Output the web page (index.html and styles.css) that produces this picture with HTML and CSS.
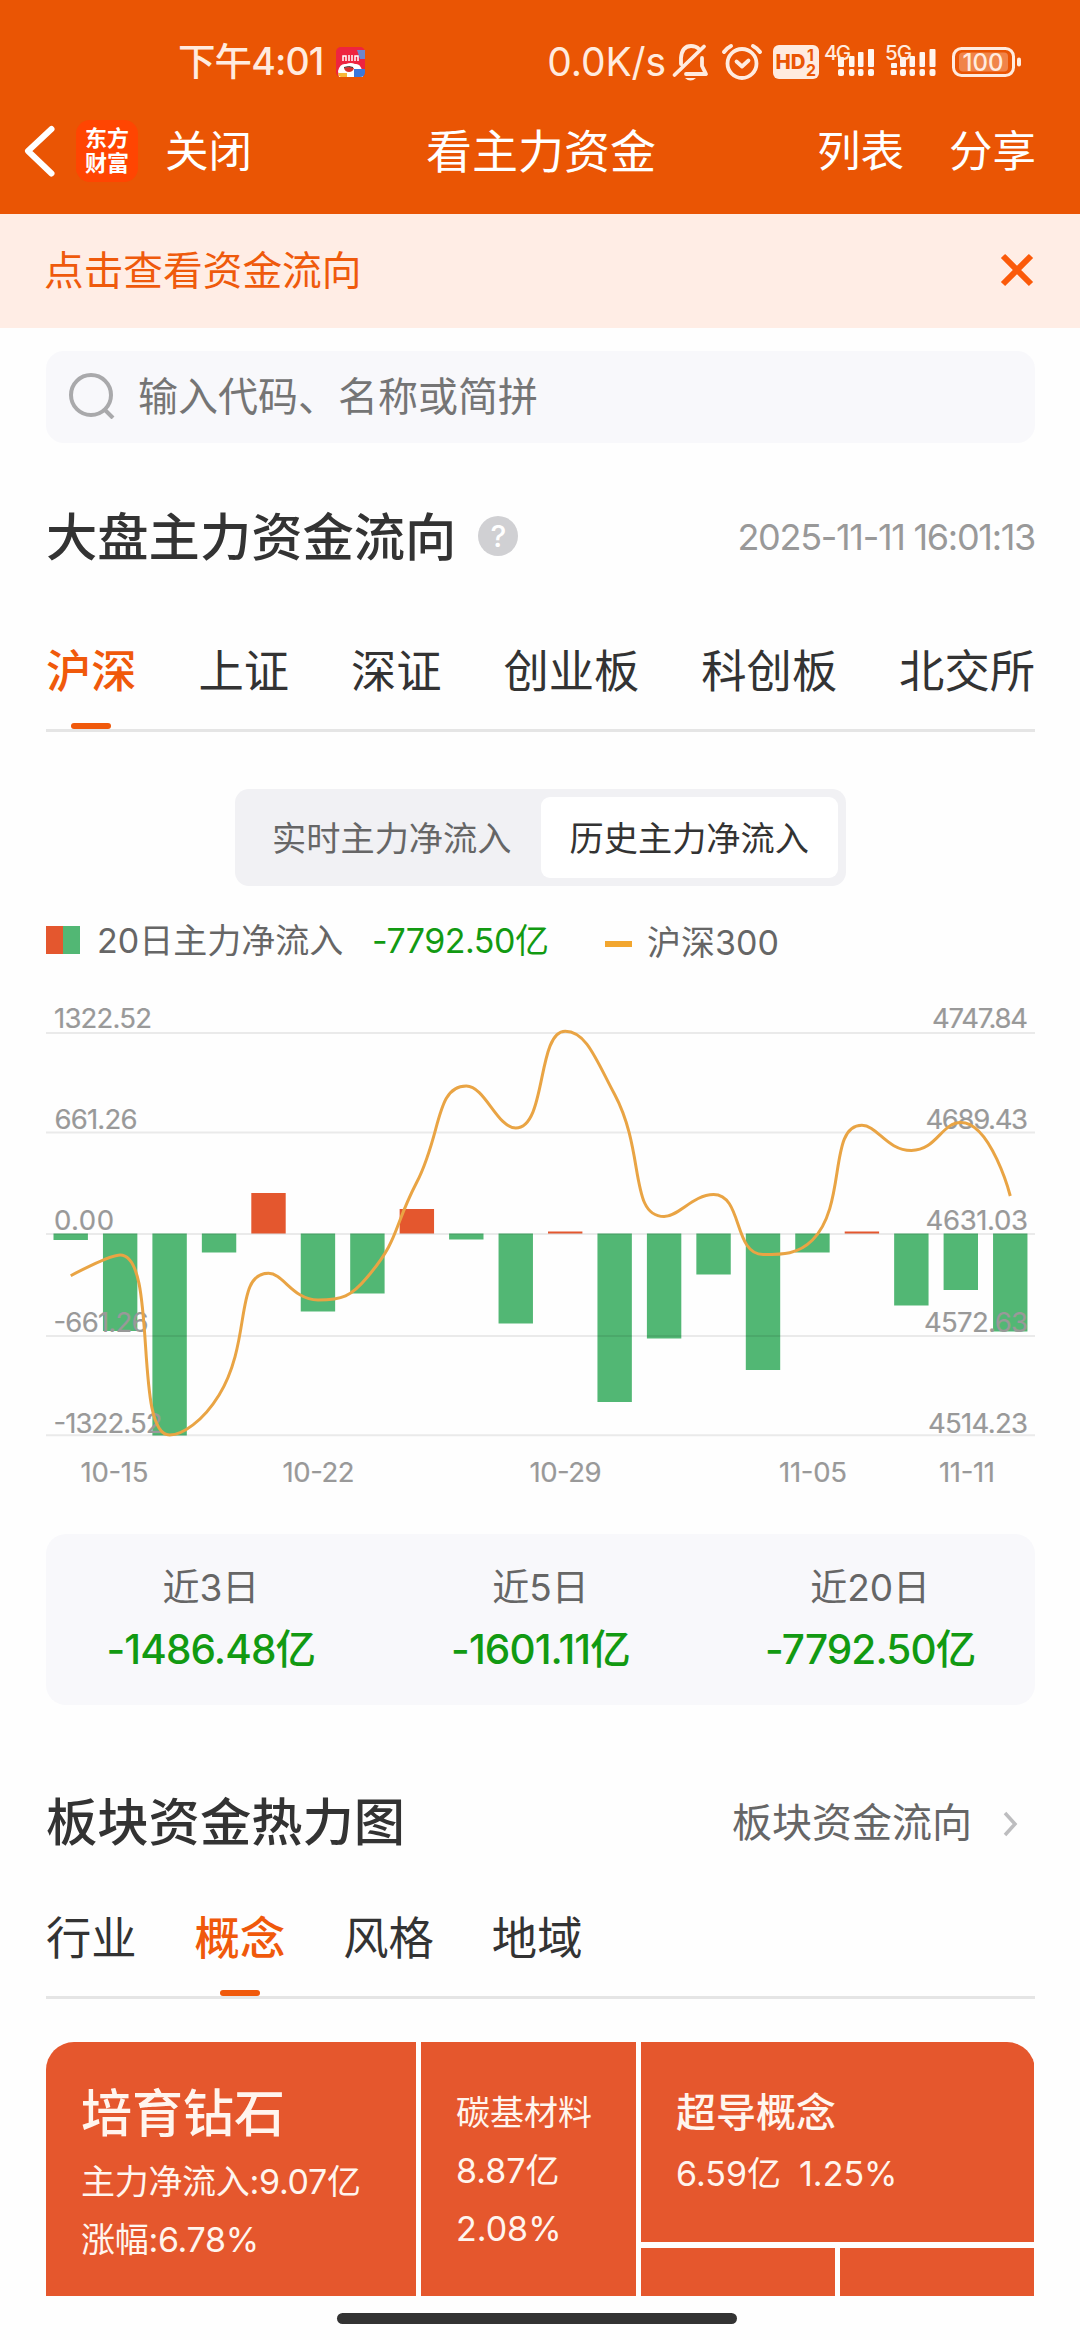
FILE: index.html
```html
<!DOCTYPE html>
<html lang="zh-CN">
<head>
<meta charset="utf-8">
<title>看主力资金</title>
<link rel="stylesheet" href="styles.css">
</head>
<body>
<div class="screen">
  <header class="header">
    <div class="status">
      <span class="clock">下午4:01</span>
      <svg class="app-badge" width="29" height="30" viewBox="0 0 29 30">
        <rect width="29" height="30" rx="5" fill="#ee2440"/>
        <path d="M21 3h8v9h-5z" fill="#6f86cc"/>
        <path d="M7 14V9h3v5M13 8v6M16 8v6M19 14V9h3v5" stroke="#fff" stroke-width="1.500" fill="none"/>
        <path d="M2 24q2-8 8-7 5-2 9 0 5-1 7 6l1 7H3z" fill="#fff"/>
        <path d="M8 21q5-2 10 0-1 4-5 4-4 0-5-4z" fill="#d8302c"/>
        <path d="M8 20.500q5-2 9 0" stroke="#333" fill="none"/>
        <path d="M18 22h11v3q0 5-5 5h-6z" fill="#3a78dc"/>
        <path d="M2 26h9v4H5q-3-1-3-4z" fill="#f8b838"/>
      </svg>
      <div class="status-right">
        <span class="speed">0.0K/s</span>
        <svg class="status-icons" width="356" height="40" viewBox="668 42 356 40" fill="none">
          <g stroke="#ffebdf" stroke-width="3.800" stroke-linecap="round" stroke-linejoin="round">
            <path d="M681 64V58Q682 46 691 46Q696 46 699 49M702 58V66L706 74H686M674.500 75L704 46.500"/>
            <circle cx="742" cy="63.500" r="14.500"/>
            <path d="M736.500 61.500l5.500 5 6.500-6"/>
            <path d="M724 52q3-4 7-6M760 52q-3-4-7-6" stroke-width="4"/>
          </g>
          <path d="M685 78h11q-5.500 5-11 0z" fill="#ffebdf"/>
          <rect x="773" y="45" width="46" height="34" rx="6" fill="#ffebdf"/>
          <g fill="#ea5504" font-family="Inter, sans-serif" font-weight="700">
            <text x="775.500" y="69" font-size="19.500" font-weight="800" textLength="30" lengthAdjust="spacingAndGlyphs">HD</text>
            <text x="807" y="60.500" font-size="16">1</text>
            <text x="806" y="75.500" font-size="16" textLength="10" lengthAdjust="spacingAndGlyphs">2</text>
          </g>
          <g fill="#fff5ee">
            <rect x="838" y="57" width="6" height="10" rx="1"/><rect x="849" y="56" width="5.500" height="11" rx="1"/><rect x="858" y="52" width="5.500" height="15" rx="1"/><rect x="868" y="49" width="6" height="18" rx="1"/>
            <rect x="838" y="69" width="6" height="7" rx="2"/><rect x="849" y="69" width="5.500" height="7" rx="2"/><rect x="858" y="69" width="5.500" height="7" rx="2"/><rect x="868" y="69" width="6" height="7" rx="2"/>
            <rect x="891" y="63" width="6" height="5" rx="1"/><rect x="891" y="70" width="6" height="5" rx="1"/>
            <rect x="900" y="57" width="6" height="10" rx="1"/><rect x="909.500" y="56" width="5.500" height="11" rx="1"/><rect x="919.500" y="52" width="5.500" height="15" rx="1"/><rect x="929.500" y="49" width="6" height="18" rx="1"/>
            <rect x="900" y="69" width="6" height="7" rx="2"/><rect x="909.500" y="69" width="5.500" height="7" rx="2"/><rect x="919.500" y="69" width="5.500" height="7" rx="2"/><rect x="929.500" y="69" width="6" height="7" rx="2"/>
          </g>
          <g fill="#ffebdf" font-family="Inter, sans-serif" font-weight="500">
            <text x="824" y="60" font-size="20.500" textLength="27">4G</text>
            <text x="885" y="60" font-size="20.500" textLength="27">5G</text>
          </g>
          <rect x="953.500" y="48.500" width="60" height="27" rx="8" stroke="#ffebdf" stroke-width="3"/>
          <rect x="959" y="52.500" width="49" height="19" rx="4" fill="#fff" opacity=".28"/>
          <rect x="1017" y="57.500" width="4" height="9" rx="2" fill="#ffebdf"/>
          <text x="962.500" y="71" font-size="24" font-weight="500" textLength="41" fill="#ffebdf" font-family="Inter, sans-serif">100</text>
        </svg>
      </div>
    </div>
    <nav class="nav">
      <svg class="back" width="34" height="54" viewBox="22 125 34 54" fill="none" stroke="#fff" stroke-width="6" stroke-linecap="round" stroke-linejoin="round"><path d="M51.500 130L28 152l23.500 22.500"/></svg>
      <div class="logo"><span>东方</span><span>财富</span></div>
      <span class="nav-text close-page">关闭</span>
      <h1 class="nav-title">看主力资金</h1>
      <span class="nav-text list">列表</span>
      <span class="nav-text">分享</span>
    </nav>
  </header>

  <div class="banner">
    <span>点击查看资金流向</span>
    <svg width="34" height="34" viewBox="0 0 34 34" stroke="#fb5a0a" stroke-width="6"><path d="M3 3l28 28M31 3L3 31"/></svg>
  </div>

  <main class="content">
    <div class="search">
      <svg width="48" height="48" viewBox="0 0 48 48" fill="none" stroke="#a9a9ab" stroke-width="4"><circle cx="23" cy="24" r="20"/><path d="M37 39l8 8"/></svg>
      <span>输入代码、名称或简拼</span>
    </div>

    <section class="title-row market-title">
      <h2>大盘主力资金流向</h2>
      <span class="help">?</span>
      <time class="num">2025-11-11 16:01:13</time>
    </section>

    <nav class="tabs spread">
      <span class="tab active">沪深</span><span class="tab">上证</span><span class="tab">深证</span><span class="tab">创业板</span><span class="tab">科创板</span><span class="tab">北交所</span>
    </nav>

    <div class="segment">
      <span class="seg">实时主力净流入</span><span class="seg on">历史主力净流入</span>
    </div>

    <div class="legend">
      <i class="swatch"></i><span class="legend-name">20日主力净流入</span><span class="legend-value">-7792.50亿</span>
      <i class="dash"></i><span class="legend-index">沪深300</span>
    </div>

    <svg class="chart" id="chart" width="989" height="510" viewBox="46 990 989 510"></svg>

    <section class="summary">
      <div><span class="sum-label">近3日</span><b class="sum-value">-1486.48亿</b></div>
      <div><span class="sum-label">近5日</span><b class="sum-value">-1601.11亿</b></div>
      <div><span class="sum-label">近20日</span><b class="sum-value">-7792.50亿</b></div>
    </section>

    <section class="title-row sector-title">
      <h2>板块资金热力图</h2>
      <a class="more">板块资金流向</a>
      <svg width="18" height="28" viewBox="0 0 18 28" fill="none" stroke="#bdbdbf" stroke-width="3.500"><path d="M3 3l10 11L3 25"/></svg>
    </section>

    <nav class="tabs packed">
      <span class="tab">行业</span><span class="tab active">概念</span><span class="tab">风格</span><span class="tab">地域</span>
    </nav>

    <section class="heat">
      <div class="cell c1"><strong>培育钻石</strong><span>主力净流入:9.07亿</span><span>涨幅:6.78%</span></div>
      <div class="cell c2"><span>碳基材料</span><span>8.87亿</span><span>2.08%</span></div>
      <div class="cell c3"><strong>超导概念</strong><p><span>6.59亿</span><span>1.25%</span></p></div>
      <div class="cell"></div>
      <div class="cell"></div>
    </section>
  </main>
  <div class="home-bar"></div>
</div>
<script src="chart.js"></script>
</body>
</html>
```

FILE: styles.css
```css
* { box-sizing: border-box; margin: 0; padding: 0; }
body {
  width: 1080px; height: 2340px; overflow: hidden; background: #fefefe; color: #333;
  font-family: Inter, "Noto Sans CJK SC", sans-serif;
}
span, h1, h2, a, time, b, strong { white-space: nowrap; font-weight: 400; }
i { font-style: normal; }
.screen { display: flex; flex-direction: column; width: 1080px; height: 2340px; }

/* header */
.header { height: 214px; flex: none; background: #ea5504; color: #fff; }
.status { display: flex; align-items: center; height: 88px; padding: 36px 56px 0 178px; color: #ffebdf; }
.clock { font-size: 37.500px; font-weight: 500; letter-spacing: -0.9px; line-height: 52px; width: 158px; }
.status-right { display: flex; align-items: center; margin-left: auto; }
.speed { font-size: 39px; letter-spacing: -0.1px; line-height: 52px; margin-right: 2px; }
.status-icons { display: block; }
.nav { display: flex; align-items: center; height: 126px; padding: 0 44px 0 22px; }
.back { flex: none; margin-right: 20px; }
.logo {
  display: flex; flex-direction: column; align-items: center; justify-content: center;
  width: 62px; height: 62px; border-radius: 14px; background: #ff4502;
}
.logo span { font-size: 22px; font-weight: 700; line-height: 25px; }
.nav-text { font-size: 43.500px; line-height: 60px; }
.close-page { margin-left: 27px; width: 261px; }
.nav-title { font-size: 46px; line-height: 60px; margin-right: auto; }
.list { margin-right: 45px; }

.banner {
  display: flex; align-items: center; justify-content: space-between; flex: none;
  height: 114px; padding: 0 46px 2px 44px; background: #ffede5; color: #ef5a0c;
  font-size: 39.700px;
}
.banner span { margin-top: -6px; }

/* content */
.content { padding: 23px 45px 0 46px; flex: none; }
.search {
  display: flex; align-items: center; gap: 22px; height: 92px; padding: 0 0 4px 22px;
  border-radius: 18px; background: #f8f8fb; color: #757575; font-size: 40px;
}
.search span { margin-top: -3px; }
.title-row { display: flex; align-items: center; height: 72px; }
.title-row h2 { font-size: 51.300px; font-weight: 500; line-height: 74px; }
.market-title { margin-top: 58px; }
.help {
  width: 40px; height: 40px; margin: -2px 0 0 22px; border-radius: 50%; background: #d0d0d3;
  color: #fff; font-size: 30px; font-weight: 500; line-height: 40px; text-align: center;
}
.num { margin-left: auto; color: #999; font-size: 36px; letter-spacing: -1.300px; }

.tabs { display: flex; height: 126px; border-bottom: 3px solid #e5e5e5; font-size: 45.300px; }
.spread { justify-content: space-between; margin-top: 33px; }
.packed { gap: 58px; margin-top: 15px; }
.tab { display: flex; flex-direction: column; align-items: center; justify-content: space-between; line-height: 132px; height: 123px; }
.tab.active { color: #f0590b; font-weight: 500; }
.tab.active::after { content: ""; flex: none; width: 40px; height: 6px; margin-top: -15px; border-radius: 3px; background: #f0590b; }

.segment { display: flex; width: 611px; height: 97px; margin: 57px auto 0 189px; padding: 8px; border-radius: 14px; background: #f1f1f4; }
.seg { flex: 1; border-radius: 9px; color: #666; font-size: 34.200px; line-height: 83px; text-align: center; }
.seg.on { background: #fff; color: #333; }

.legend { display: flex; align-items: center; height: 50px; margin-top: 29px; color: #666; font-size: 34px; }
.swatch { width: 34px; height: 28px; margin-right: 17px; background: linear-gradient(90deg, #e4572e 50%, #52b774 50%); }
.legend-name { width: 275px; margin-top: -3px; }
.legend-value { width: 233px; margin-top: -3px; color: #129a12; letter-spacing: -0.5px; }
.dash { width: 27px; height: 6px; margin: 8px 15px 0 0; background: #f2a62f; }
.legend-index { margin-top: 1px; }

.chart { display: block; margin-top: 25px; }
.grid line { stroke: #000; stroke-opacity: .08; stroke-width: 2; }
.axis text { fill: #999; stroke: #999; stroke-width: .2; font-size: 27.500px; }
.trend { fill: none; stroke: #e9a444; stroke-width: 3; }

.summary { display: grid; grid-template-columns: repeat(3, 1fr); height: 171px; margin-top: 34px; padding-top: 27px; border-radius: 20px; background: #f8f8fb; }
.summary div { display: flex; flex-direction: column; align-items: center; }
.sum-label { color: #666; font-size: 37px; line-height: 54px; }
.sum-value { color: #129a12; font-size: 40.500px; font-weight: 500; line-height: 70px; letter-spacing: -0.900px; }

.sector-title { margin-top: 81px; }
.more { margin: -5px 0 0 auto; color: #666; font-size: 40px; }
.sector-title svg { margin: 4px 15px 0 30px; }

.heat {
  display: grid; grid-template-columns: 370px 215px 194px 194px; grid-template-rows: 200px 48px;
  column-gap: 5px; row-gap: 6px; margin-top: 43px; border-radius: 28px 28px 0 0; overflow: hidden;
}
.cell { display: flex; flex-direction: column; padding-left: 35px; background: #e5572d; color: #fff5ee; font-size: 34px; }
.c1, .c2 { grid-row: 1 / 3; }
.c3 { grid-column: 3 / 5; }
.cell strong { font-weight: 500; }
.c1 strong { font-size: 51px; line-height: 75px; margin-top: 34px; }
.c1 span { position: relative; top: 2px; line-height: 58px; letter-spacing: -0.300px; }
.c2 span { line-height: 58px; }
.c2 { padding-top: 42px; }
.c3 strong { font-size: 40px; line-height: 60px; margin-top: 41px; }
.c3 p { display: flex; gap: 18px; line-height: 62px; }

.home-bar { width: 400px; height: 11px; margin: 17px auto 0 337px; border-radius: 6px; background: #333; }
```

FILE: chart.js
```js
const NS = "http://www.w3.org/2000/svg";
const chart = document.getElementById("chart");

function add(parent, name, attrs, text) {
  const el = document.createElementNS(NS, name);
  for (const key in attrs) el.setAttribute(key, attrs[key]);
  if (text) el.textContent = text;
  parent.appendChild(el);
  return el;
}

// Bar ends and index points, one per trading day, in chart units.
const zero = 1233.5, left = 46, step = 49.45;
const bars = [1240, 1331, 1435.5, 1252.5, 1193, 1311.5, 1293.5, 1209, 1239.5, 1323.5, 1231.5, 1402, 1338.5, 1274.5, 1370, 1252.5, 1231.5, 1305.5, 1290, 1331.5];
const index = [1275.7, 1255, 1435, 1395, 1273.3, 1300, 1277, 1182, 1086, 1128, 1031.3, 1094.5, 1216.5, 1194.5, 1254.5, 1240, 1125.3, 1150.5, 1122.5, 1196];

const barGroup = add(chart, "g", {});
bars.forEach((end, i) => add(barGroup, "rect", {
  x: left + step * i + 7.5, width: 34.4,
  y: Math.min(zero, end), height: Math.abs(end - zero),
  fill: end < zero ? "#e4572e" : "#52b774"
}));

const grid = add(chart, "g", { class: "grid" });
[1033, 1132.5, 1234, 1336, 1435.3].forEach(y => add(grid, "line", { x1: 46, x2: 1035, y1: y, y2: y }));

const axis = add(chart, "g", { class: "axis" });
[
  ["1322.52", 54, 98, 1028], ["661.26", 54.5, 83, 1129], ["0.00", 54, 60, 1230],
  ["-661.26", 53.5, 95, 1331.5], ["-1322.52", 53.5, 109, 1432.7],
  ["4747.84", 932, 96, 1028], ["4689.43", 925.5, 102.5, 1129], ["4631.03", 925.5, 102.5, 1230],
  ["4572.63", 924, 104, 1331.5], ["4514.23", 928, 100, 1432.7],
  ["10-15", 80.5, 68, 1482], ["10-22", 282.5, 72, 1482], ["10-29", 529.5, 72, 1482],
  ["11-05", 779, 68, 1482], ["11-11", 939, 56, 1482]
].forEach(([label, x, width, y]) => add(axis, "text", { x, y, textLength: width }, label));

// Smooth curve whose control points stay inside each segment's bounds.
const pts = index.map((y, i) => [left + step * (i + 0.5), y]);
const clamp = (v, a, b) => Math.max(Math.min(v, Math.max(a, b)), Math.min(a, b));
let d = `M${pts[0]}`, out = pts[0];
for (let i = 1; i < pts.length; i++) {
  const p = pts[i], prev = pts[i - 1], next = pts[i + 1];
  let cin = p, nextOut = p;
  if (next) {
    const lp = Math.hypot(p[0] - prev[0], p[1] - prev[1]);
    const ln = Math.hypot(next[0] - p[0], next[1] - p[1]);
    const o = [0, 1].map(k => clamp(p[k] + (next[k] - prev[k]) * 0.5 * ln / (lp + ln), next[k], p[k]));
    cin = [0, 1].map(k => clamp(p[k] - (o[k] - p[k]) * lp / ln, prev[k], p[k]));
    nextOut = [0, 1].map(k => p[k] + (p[k] - cin[k]) * ln / lp);
  }
  d += `C${out} ${cin} ${p}`;
  out = nextOut;
}
add(chart, "path", { class: "trend", d });
```
